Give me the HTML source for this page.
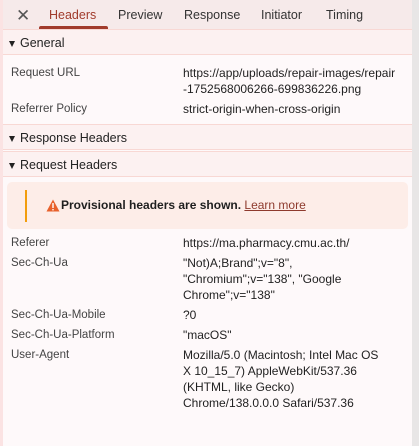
<!DOCTYPE html>
<html><head><meta charset="utf-8"><style>
*{margin:0;padding:0;box-sizing:border-box}
body{width:419px;height:446px;overflow:hidden;background:#fef9fa;font-family:"Liberation Sans",sans-serif;font-size:12px;color:#1f1f1f;position:relative}
.lb{position:absolute;left:0;top:0;width:3px;height:446px;background:#fbe3e3}
.sb{position:absolute;right:0;top:0;width:7px;height:446px;background:#e8e6e6}
.tabs{position:absolute;left:3px;top:0;width:409px;height:30px;background:#f6eaea;border-bottom:1px solid #f5d5d2}
.tab{position:absolute;top:8px;font-size:12.5px;color:#333}
.sec{position:absolute;left:3px;width:409px;height:26px;background:#fcf1f1;border-bottom:1px solid #f8d8d4;border-top:1px solid #f8d8d4;font-size:12.5px;padding:6px 0 0 17px;color:#222}
.sec:before{content:"";position:absolute;left:6px;top:11px;border-left:3.5px solid transparent;border-right:3.5px solid transparent;border-top:6px solid #222}
.r{position:absolute;font-size:11.5px;line-height:16px}
.k{left:11px;color:#444}
.v{left:183px;color:#1f1f1f;width:230px;font-size:12px}
</style></head><body>
<div class="lb"></div><div class="sb"></div>
<div class="tabs">
<div style="position:absolute;left:13px;top:6px;font-size:17px;color:#555">✕</div>
<div class="tab" style="left:46px;color:#a13b2c">Headers</div>
<div style="position:absolute;left:36px;top:26px;width:69px;height:3px;background:#a13b2c;border-radius:2px 2px 0 0"></div>
<div class="tab" style="left:115px">Preview</div>
<div class="tab" style="left:181px">Response</div>
<div class="tab" style="left:258px">Initiator</div>
<div class="tab" style="left:323px">Timing</div>
</div>
<div class="sec" style="top:29px">General</div>
<div class="r k" style="top:65px">Request URL</div>
<div class="r v" style="top:65px;white-space:nowrap;overflow:hidden;width:229px">https://app/uploads/repair-images/repair<br>-1752568006266-699836226.png</div>
<div class="r k" style="top:101px">Referrer Policy</div>
<div class="r v" style="top:101px">strict-origin-when-cross-origin</div>
<div class="sec" style="top:124px">Response Headers</div>
<div class="sec" style="top:151px">Request Headers</div>
<div style="position:absolute;left:7px;top:182px;width:401px;height:47px;background:#fdede8;border-radius:5px"></div>
<div style="position:absolute;left:25px;top:190px;width:2px;height:32px;background:#f29d0d"></div>
<svg style="position:absolute;left:46px;top:199px" width="14" height="13" viewBox="0 0 14 13"><path d="M7 0.5L13.5 12.5H0.5Z" fill="#e8612c"/><rect x="6.3" y="4" width="1.4" height="5" fill="#fff"/><rect x="6.3" y="10" width="1.4" height="1.4" fill="#fff"/></svg>
<div style="position:absolute;left:61px;top:198px;font-size:12px;font-weight:bold;color:#1f1f1f">Provisional headers are shown. <span style="font-weight:normal;color:#8e3a2d;text-decoration:underline">Learn more</span></div>
<div class="r k" style="top:235px">Referer</div>
<div class="r v" style="top:235px">https://ma.pharmacy.cmu.ac.th/</div>
<div class="r k" style="top:255px">Sec-Ch-Ua</div>
<div class="r v" style="top:255px">"Not)A;Brand";v="8",<br>"Chromium";v="138", "Google<br>Chrome";v="138"</div>
<div class="r k" style="top:307px">Sec-Ch-Ua-Mobile</div>
<div class="r v" style="top:307px">?0</div>
<div class="r k" style="top:327px">Sec-Ch-Ua-Platform</div>
<div class="r v" style="top:327px">"macOS"</div>
<div class="r k" style="top:347px">User-Agent</div>
<div class="r v" style="top:347px">Mozilla/5.0 (Macintosh; Intel Mac OS<br>X 10_15_7) AppleWebKit/537.36<br>(KHTML, like Gecko)<br>Chrome/138.0.0.0 Safari/537.36</div>
</body></html>
